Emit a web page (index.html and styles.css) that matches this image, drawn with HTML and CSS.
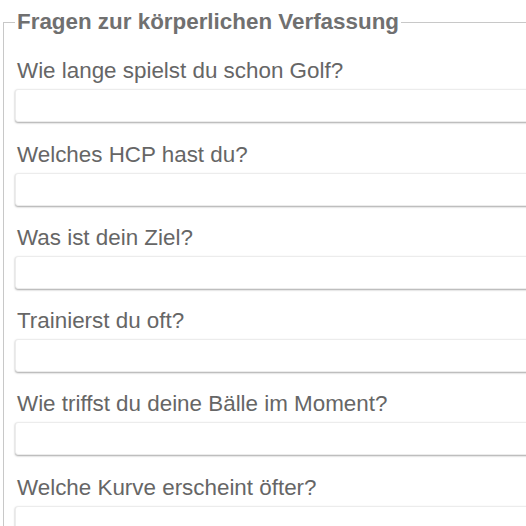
FILE: index.html
```html
<!DOCTYPE html>
<html lang="de">
<head>
<meta charset="utf-8">
<title>Fragen</title>
<link rel="stylesheet" href="styles.css">
</head>
<body>
<form class="form">
  <fieldset class="group">
    <legend class="group-title">Fragen zur körperlichen Verfassung</legend>
    <div class="field">
      <label class="field-label" for="q1">Wie lange spielst du schon Golf?</label>
      <input class="field-input" id="q1" type="text">
    </div>
    <div class="field">
      <label class="field-label" for="q2">Welches HCP hast du?</label>
      <input class="field-input" id="q2" type="text">
    </div>
    <div class="field">
      <label class="field-label" for="q3">Was ist dein Ziel?</label>
      <input class="field-input" id="q3" type="text">
    </div>
    <div class="field">
      <label class="field-label" for="q4">Trainierst du oft?</label>
      <input class="field-input" id="q4" type="text">
    </div>
    <div class="field">
      <label class="field-label" for="q5">Wie triffst du deine Bälle im Moment?</label>
      <input class="field-input" id="q5" type="text">
    </div>
    <div class="field">
      <label class="field-label" for="q6">Welche Kurve erscheint öfter?</label>
      <input class="field-input" id="q6" type="text">
    </div>
  </fieldset>
</form>
</body>
</html>
```
FILE: styles.css
```css
html, body {
  margin: 0;
  padding: 0;
  overflow: hidden;
  background: #fff;
}
body {
  font-family: "Liberation Sans", Arial, sans-serif;
  color: #666;
}
.form {
  width: 600px;
  padding-top: 9px;
}
.group {
  margin: 0 0 0 3px;
  border: 1px solid #c8c8c8;
  padding: 4px 0 20px 11px;
}
.group-title {
  font-size: 22.4px;
  font-weight: bold;
  color: #707070;
  padding: 0 2px;
  line-height: 26px;
}
.field {
  display: flex;
  flex-direction: column;
  padding-top: 19.3px;
}
.field-label {
  font-size: 22.4px;
  line-height: 26px;
  margin: 0 0 5px 2px;
  color: #666;
}
.field-input {
  box-sizing: border-box;
  height: 33px;
  width: 100%;
  margin: 0;
  border: 1px solid #ececec;
  border-radius: 3px;
  box-shadow: 0 1px 2px rgba(0, 0, 0, 0.35);
  background: #fff;
}
```
